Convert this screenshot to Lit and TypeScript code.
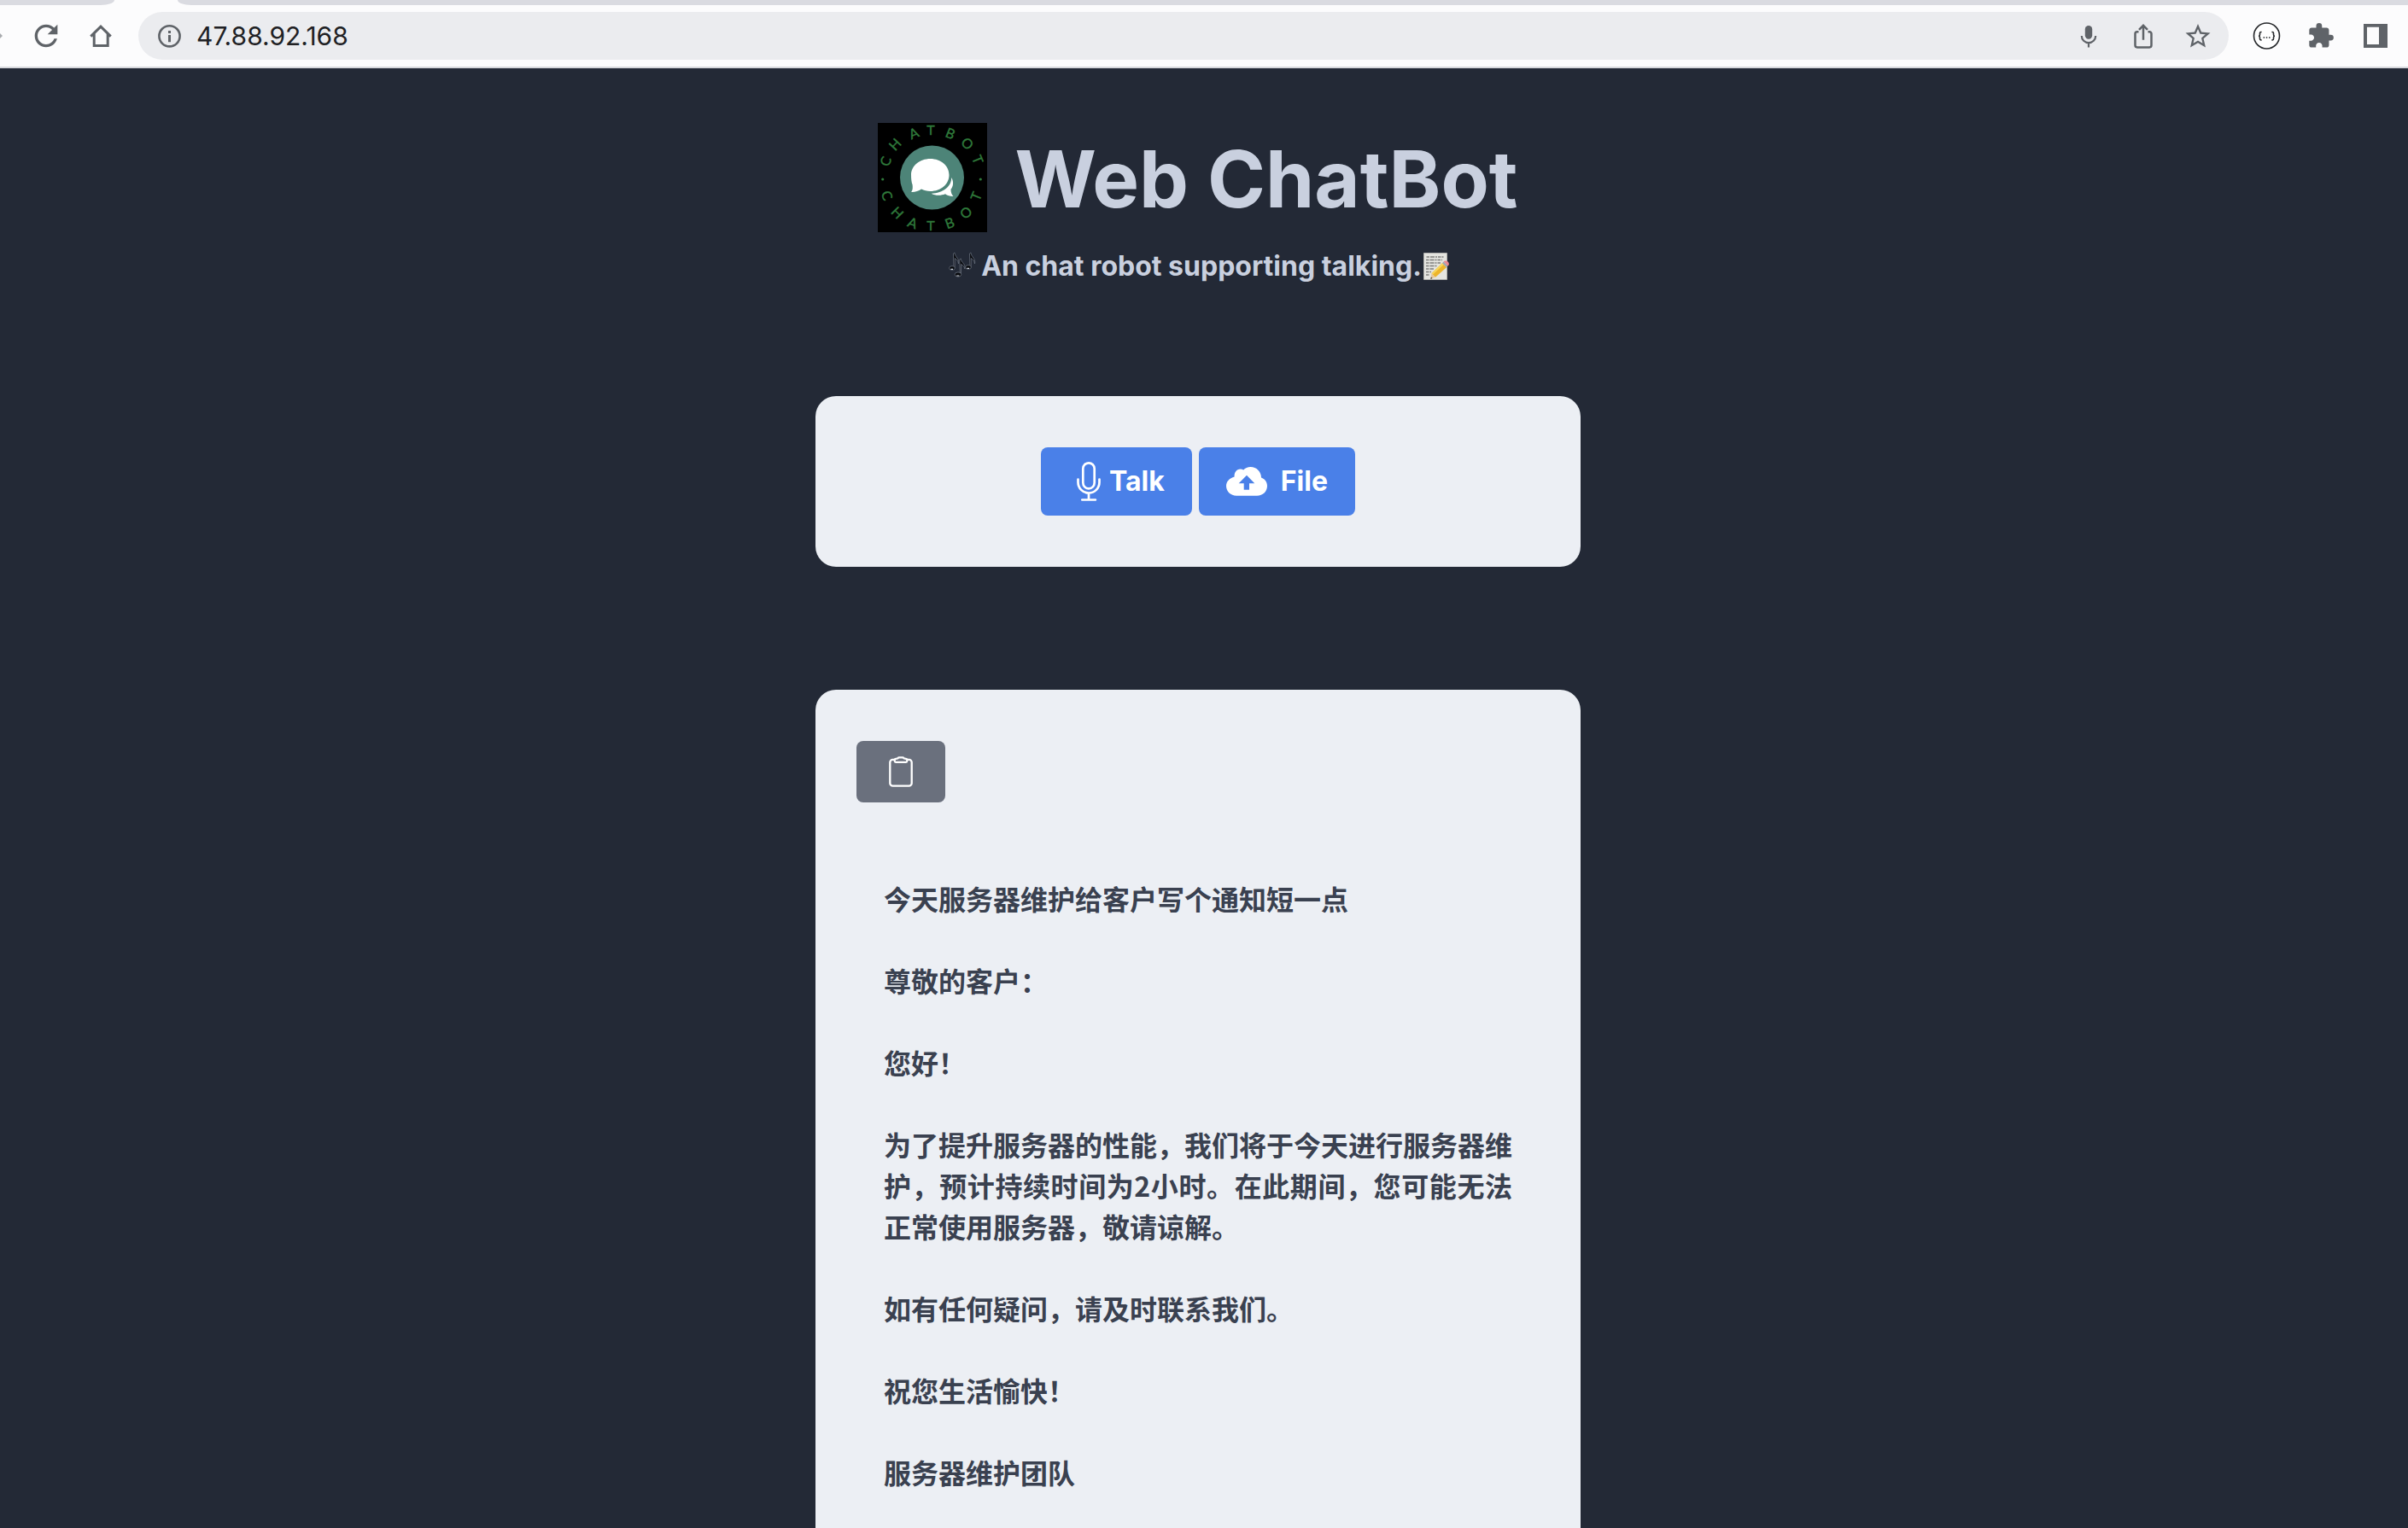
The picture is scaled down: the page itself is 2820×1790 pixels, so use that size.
import { LitElement, html, css, svg } from "lit";
import { customElement } from "lit/decorators.js";

const MESSAGE = [
  "今天服务器维护给客户写个通知短一点",
  "尊敬的客户：",
  "您好！",
  "为了提升服务器的性能，我们将于今天进行服务器维护，预计持续时间为2小时。在此期间，您可能无法正常使用服务器，敬请谅解。",
  "如有任何疑问，请及时联系我们。",
  "祝您生活愉快！",
  "服务器维护团队",
];

/* Letters of the badge ring: glyph, centre x, centre y, rotation. */
const RING: [string, number, number, number][] = [
  ["C", 9, 45, -70], ["H", 20, 25, -47], ["A", 42, 12, -22], ["T", 62, 8, 0],
  ["B", 85, 12, 22], ["O", 105, 24, 45], ["T", 117, 43, 68],
  ["C", 11, 85, 70], ["H", 23, 105, 45], ["A", 41, 117, 20], ["T", 62, 120, 0],
  ["B", 84, 117, -20], ["O", 103, 105, -45], ["T", 115, 86, -68],
];

@customElement("browser-bar")
export class BrowserBar extends LitElement {
  static styles = css`
    :host { display: block; flex: none; background: #fcfcfd; border-bottom: 2px solid #d7d8dd; font-family: Inter, sans-serif; }
    .tabs { display: flex; justify-content: space-between; height: 6px; }
    .tab { background: #dadbe1; }
    .tab-left { width: 134px; border-bottom-right-radius: 16px 6px; }
    .tab-right { flex: 1; margin-left: 74px; border-bottom-left-radius: 16px 6px; }
    .bar { display: flex; align-items: center; gap: 24px; padding: 8px 18px 8px 0; }
    .icon { display: block; flex: none; width: 40px; height: 40px; padding: 0; border: 0; background: none; color: #5f6368; }
    .icon svg { display: block; width: 40px; height: 40px; }
    .forward { width: 10px; overflow: hidden; color: #a9abaf; }
    .address { display: flex; flex: 1; align-items: center; gap: 24px; height: 56px; padding: 0 16px; border-radius: 28px; background: #ebecef; box-sizing: border-box; }
    .site { display: flex; flex: 1; align-items: center; gap: 12px; }
    .url { flex: 1; min-width: 0; padding: 0; border: 0; outline: 0; background: none; color: #202124; font: 400 30px/40px Inter, sans-serif; }
  `;

  render() {
    return html`
      <div class="tabs"><div class="tab tab-left"></div><div class="tab tab-right"></div></div>
      <div class="bar">
        <button class="icon forward" aria-label="Forward">
          <svg viewBox="0 0 40 40"><path fill="currentColor" d="M0 17l3 3-3 3z" /></svg>
        </button>
        <button class="icon" aria-label="Reload">
          <svg viewBox="0 0 24 24"><path fill="currentColor" d="M17.65 6.35C16.2 4.9 14.21 4 12 4c-4.42 0-7.99 3.58-7.99 8s3.57 8 7.99 8c3.73 0 6.84-2.55 7.73-6h-2.08c-.82 2.33-3.04 4-5.65 4-3.31 0-6-2.69-6-6s2.69-6 6-6c1.66 0 3.14.69 4.22 1.78L13 11h7V4l-2.35 2.35z" /></svg>
        </button>
        <button class="icon" aria-label="Home">
          <svg viewBox="0 0 40 40"><path fill="none" stroke="currentColor" stroke-width="3" d="M8.3 20.6L20 9.2l11.7 11.4M12.2 17.5v14h16v-14" /></svg>
        </button>
        <div class="address">
          <div class="site">
            <button class="icon" aria-label="Site information">
              <svg viewBox="0 0 40 40"><circle cx="20.500" cy="20.300" r="12.100" fill="none" stroke="currentColor" stroke-width="2.600" /><path fill="currentColor" d="M19 14h3v3h-3zM19 19h3v8.200h-3z" /></svg>
            </button>
            <input class="url" aria-label="Address" value="47.88.92.168" />
          </div>
          <button class="icon" aria-label="Voice search">
            <svg viewBox="0 0 40 40"><rect x="15.800" y="8" width="8.400" height="15.800" rx="4.200" fill="currentColor" /><path fill="none" stroke="currentColor" stroke-width="2.200" d="M11.800 20a8.200 8.200 0 0 0 16.400 0M20 28v5.400" /></svg>
          </button>
          <button class="icon" aria-label="Share">
            <svg viewBox="0 0 40 40"><path fill="none" stroke="currentColor" stroke-width="2.500" d="M14.500 15.200h-1.700a2.300 2.300 0 0 0-2.300 2.300v13.600a2.300 2.300 0 0 0 2.300 2.300h14.400a2.300 2.300 0 0 0 2.300-2.300V17.500a2.300 2.300 0 0 0-2.300-2.300h-1.700M20 24.800V8.500M15 12.800l5-5 5 5" /></svg>
          </button>
          <button class="icon" aria-label="Bookmark">
            <svg viewBox="0 0 40 40"><path fill="currentColor" transform="translate(2.600 3.100) scale(1.450)" d="M22 9.240l-7.190-.62L12 2 9.190 8.630 2 9.240l5.460 4.730L5.820 21 12 17.270 18.180 21l-1.630-7.030L22 9.240zM12 15.400l-3.760 2.270 1-4.280-3.320-2.880 4.380-.38L12 6.100l1.710 4.040 4.380.38-3.320 2.880 1 4.280L12 15.400z" /></svg>
          </button>
        </div>
        <button class="icon" aria-label="JSON viewer">
          <svg viewBox="0 0 40 40"><g fill="none" stroke="#26282b" stroke-width="1.600"><circle cx="20.500" cy="20" r="15" fill="#fff" /><path d="M14.600 15.500h-.8q-1.300 0-1.300 1.300v1.700q0 1.700-1.500 1.700 1.500 0 1.500 1.700v1.700q0 1.300 1.300 1.300h.8M26.400 15.500h.8q1.300 0 1.300 1.300v1.700q0 1.700 1.500 1.700-1.500 0-1.500 1.700v1.700q0 1.300-1.300 1.300h-.8" /></g><path fill="#26282b" d="M16.600 21.200h1.500v1.500h-1.500zM19.800 21.200h1.500v1.500h-1.500zM23 21.200h1.500v1.500H23z" /></svg>
        </button>
        <button class="icon" aria-label="Extensions">
          <svg viewBox="0 0 40 40"><path fill="currentColor" transform="translate(3.600 3.700) scale(1.360)" d="M20.500 11H19V7c0-1.100-.9-2-2-2h-4V3.500a2.500 2.500 0 0 0-5 0V5H4c-1.100 0-1.990.9-1.990 2v3.800H3.500c1.490 0 2.700 1.210 2.700 2.700s-1.210 2.700-2.700 2.700H2V20c0 1.100.9 2 2 2h3.800v-1.500c0-1.490 1.210-2.700 2.700-2.700s2.700 1.210 2.700 2.700V22H17c1.100 0 2-.9 2-2v-4h1.500a2.500 2.500 0 0 0 0-5z" /></svg>
        </button>
        <button class="icon" aria-label="Side panel">
          <svg viewBox="0 0 40 40"><path fill="currentColor" fill-rule="evenodd" d="M6 6h28v28H6zM10 9.800v20.300h14V9.800z" /></svg>
        </button>
      </div>
    `;
  }
}

@customElement("app-root")
export class AppRoot extends LitElement {
  static styles = css`
    :host { display: flex; flex-direction: column; height: 100vh; background: #232936; color: #c9d0df; font-family: Inter, "Noto Sans CJK SC", sans-serif; }
    .page { flex: 1; min-height: 0; overflow-y: auto; scrollbar-width: none; padding: 64px 14px 64px 0; }
    .header { display: flex; flex-direction: column; align-items: center; gap: 16px; margin-bottom: 128px; }
    .brand { display: flex; align-items: center; gap: 32px; }
    .logo { display: block; width: 128px; height: 128px; overflow: visible; }
    .ring { fill: #2f7a3b; stroke: #2f7a3b; stroke-width: .4; font: 400 16px Lato, sans-serif; text-anchor: middle; }
    .title { margin: 0; padding-top: 4px; font-size: 92px; line-height: 96px; font-weight: 700; }
    .tagline { display: flex; align-items: center; margin: 0; font-size: 32px; line-height: 48px; font-weight: 700; }
    .emoji { display: block; width: 40px; height: 40px; }
    .memo { width: 32px; }
    .card { box-sizing: border-box; width: 100%; max-width: 896px; margin: 0 auto 144px; padding: 60px 48px; border-radius: 24px; background: #eceff4; }
    .actions { display: flex; justify-content: center; gap: 8px; }
    .button { display: flex; align-items: center; height: 80px; padding: 0 32px; border: 0; border-radius: 8px; background: #4a80e8; color: #fff; font: 700 32px/48px Inter, sans-serif; }
    .button svg { display: block; width: 48px; height: 48px; }
    .file { gap: 16px; }
    .copy { display: block; padding: 16px 32px; border: 0; border-radius: 8px; background: #6a707d; color: #fff; }
    .copy svg { display: block; width: 40px; height: 40px; }
    .message { display: flex; flex-direction: column; gap: 48px; padding: 88px 32px 32px; color: #3a4150; font-family: "Noto Sans CJK SC", sans-serif; font-size: 32px; line-height: 48px; font-weight: 600; text-align: justify; }
    .line { margin: 0; }
  `;

  private logo() {
    return html`
      <svg class="logo" viewBox="0 0 128 128" role="img" aria-label="ChatBot">
        <rect width="128" height="128" fill="#000" />
        <circle cx="63.500" cy="64" r="37.500" fill="#4d8478" />
        <path fill="#fff" d="M61.500 42c12.500 0 22 8.300 22 19s-9.500 19-22 19c-4 0-7.500-.9-10.500-2.500-3.200 2.400-7.500 3.700-11.800 3.500 1.900-2.300 1.700-5.300 1.400-8.400C39.400 69 39 65.500 39 61c0-10.700 10-19 22.500-19z" />
        <path fill="#fff" d="M86.200 64c2.900 4.800 2.300 10.300-.7 13.800 0 3.500 1 6.200 2.900 8.200-3.700.1-6.800-.9-9.400-2.700-5.600 2.200-11.800 1.900-16.300-.6C76.500 82.200 86.500 74.300 86.200 64z" />
        <g class="ring">
          ${RING.map(([c, x, y, r]) => svg`<text transform="translate(${x} ${y}) rotate(${r})" y="6">${c}</text>`)}
        </g>
        <circle cx="5.700" cy="66" r="1.600" fill="#2f7a3b" />
        <circle cx="120.300" cy="66" r="1.600" fill="#2f7a3b" />
      </svg>
    `;
  }

  private notes() {
    return html`
      <svg class="emoji" viewBox="0 0 40 40" role="img" aria-label="Musical notes">
        <g fill="#07090d" stroke="#68707e" stroke-width=".8">
          <path d="M7.500 5l1.500-1c.3 5 6 7 4.500 13-.3-3.500-2-5-4.300-6.500v11.300H8z" />
          <ellipse cx="6" cy="22" rx="3.400" ry="2.400" />
          <path d="M26.500 5l1.500-1c.3 5 6 7 4.500 13-.3-3.500-2-5-4.300-6.500v10.300H27z" />
          <ellipse cx="25" cy="21" rx="3.400" ry="2.400" />
          <path d="M14.800 12l1.500-1c.3 5 6 6 4.500 12-.3-3-2-4-4.300-5.500v11.300h-1.200z" />
          <ellipse cx="13" cy="29.500" rx="3.800" ry="2.600" />
        </g>
        <path fill="none" stroke="#d5dae2" stroke-width="1.200" d="M4.500 23.300h2.500M23.500 22.300H26M11.300 31h3" />
      </svg>
    `;
  }

  private memo() {
    return html`
      <svg class="emoji memo" viewBox="0 0 32 40" role="img" aria-label="Memo">
        <path fill="#e4e4e0" stroke="#bdbdb8" stroke-width=".8" d="M2.500 4.500h27v31h-27z" />
        <path fill="none" stroke="#7d7d7b" stroke-width="1.300" stroke-dasharray="3.500 1 5 1 2 1" d="M5.500 9h20M5 12.500h19M5 16h17M5 19.500h13M5 23h9M5 26.500h6M5 30h4" />
        <path fill="#edb52c" d="M24 16.200l5 5-13 11.500-4.500-4.500z" />
        <path fill="#f8d75c" d="M24 16.200l1.700 1.700-12.700 11.700-1.500-1.400z" />
        <path fill="#e5c79b" d="M11.500 28.200l4.500 4.500-5.500 2z" />
        <path fill="#3b3630" d="M10.900 32.400l1.600 1.500-2.200 1z" />
        <path fill="#9fa6ae" d="M24 16.200l1.600-1.600 5 5-1.600 1.600z" />
        <path fill="#e98790" d="M25.600 14.600l1.300-1q2.500-.6 4 1.200t.7 3.800l-1 1z" />
      </svg>
    `;
  }

  render() {
    return html`
      <browser-bar></browser-bar>
      <main class="page">
        <header class="header">
          <div class="brand">
            ${this.logo()}
            <h1 class="title">Web ChatBot</h1>
          </div>
          <p class="tagline">${this.notes()}<span>An chat robot supporting talking.</span>${this.memo()}</p>
        </header>

        <section class="card actions">
          <button class="button">
            <svg viewBox="0 0 48 48" fill="none" stroke="currentColor" stroke-width="2.700" stroke-linecap="round">
              <rect x="17.300" y="2.300" width="13.400" height="30" rx="6.700" />
              <path d="M11.500 21.500v3.500a12.500 12.500 0 0 0 25 0v-3.500M24 38v7.500M16.300 45.500h15.600" />
            </svg>
            <span>Talk</span>
          </button>
          <button class="button file">
            <svg viewBox="0 0 48 48" fill="currentColor">
              <path fill-rule="evenodd" d="M12 40.700C5.400 40.700 0 35.600 0 29.200c0-5 3.700-9.200 9.600-10.800-.4-5 2.500-9 7-9 1.400 0 2.600.4 3.600 1C22.300 8.300 25.200 7 28.500 7 35.500 7 41 12.500 41 19.600c4.300 1.600 7 5.300 7 9.600 0 6.400-5 11.500-12 11.500zM24 16.700l-9.300 9.600h6v7.400H27v-7.400h6.300z" />
            </svg>
            <span>File</span>
          </button>
        </section>

        <section class="card">
          <button class="copy" aria-label="Copy">
            <svg viewBox="0 0 40 40" fill="none" stroke="currentColor" stroke-width="2.300">
              <path d="M13.500 5.800h-3a3.200 3.200 0 0 0-3.200 3.200V33.500a3.200 3.200 0 0 0 3.200 3.200h19a3.200 3.200 0 0 0 3.200-3.200V9a3.200 3.200 0 0 0-3.200-3.200h-3" />
              <path d="M16.500 4.300Q17 3.400 18 3.400h4q1 0 1.500.9l3 .9q.8.300.8 1.200v1.200q0 1.300-1.300 1.300H14q-1.300 0-1.300-1.300V6.400q0-.9.8-1.200z" />
            </svg>
          </button>
          <div class="message" lang="zh-CN">${MESSAGE.map((t) => html`<p class="line">${t}</p>`)}</div>
        </section>
      </main>
    `;
  }
}
